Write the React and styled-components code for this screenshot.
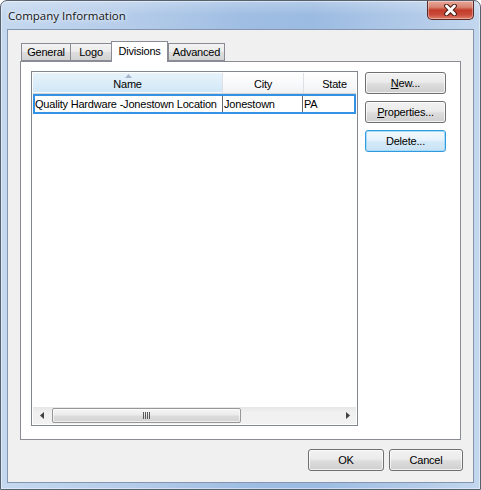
import React from 'react';
import styled, { createGlobalStyle } from 'styled-components';

const GlobalStyle = createGlobalStyle`
  html, body {
    margin: 0;
    padding: 0;
    width: 481px;
    height: 490px;
    overflow: hidden;
    background: #fff;
  }
  * { box-sizing: border-box; }
`;

const Window = styled.div`
  width: 481px;
  height: 490px;
  display: flex;
  flex-direction: column;
  padding: 0 6px 6px;
  border: 1px solid #58626f;
  border-radius: 7px 7px 0 0;
  background:
    linear-gradient(180deg, rgba(255,255,255,0.25) 0px, rgba(255,255,255,0) 14px),
    linear-gradient(90deg, #c4d8ef 0%, #b6cdea 25%, #a0bee3 50%, #9cbbe2 65%, #b0c9e8 85%, #c3d7ee 100%);
  box-shadow: inset 0 0 0 1px rgba(255,255,255,0.45);
  font-family: "Liberation Sans", Arial, sans-serif;
  font-size: 11px;
  letter-spacing: -0.2px;
  color: #000;
`;

const TitleBar = styled.div`
  height: 28px;
  display: flex;
  align-items: flex-start;
  justify-content: space-between;
`;

const Title = styled.div`
  margin: 7px 0 0 1px;
  line-height: 16px;
  font-family: "Open Sans", "Liberation Sans", sans-serif;
  font-size: 11.5px;
  letter-spacing: 0;
  color: #141414;
  text-shadow: 0 0 6px rgba(255,255,255,0.9), 0 0 3px rgba(255,255,255,0.8);
`;

const CloseButton = styled.div`
  width: 47px;
  height: 19px;
  display: flex;
  align-items: center;
  justify-content: center;
  border: 1px solid #5b2a26;
  border-top: none;
  border-radius: 0 0 5px 5px;
  background: linear-gradient(180deg, #e8a89c 0%, #d7826f 35%, #c43c2a 50%, #c9493a 75%, #e0806a 100%);
  box-shadow: inset 0 0 0 1px rgba(255,255,255,0.35);
`;

const Client = styled.div`
  flex: 1;
  display: flex;
  flex-direction: column;
  padding: 11px 12px 11px;
  background: #f0f0f0;
  border: 1px solid #8396ad;
`;

const TabStrip = styled.div`
  height: 20px;
  display: flex;
  align-items: flex-end;
  padding-left: 1px;
`;

const Tab = styled.div`
  position: relative;
  width: ${p => p.$w}px;
  height: ${p => (p.$active ? 21 : 18)}px;
  margin-bottom: ${p => (p.$active ? -1 : 0)}px;
  display: flex;
  align-items: center;
  justify-content: center;
  padding-bottom: ${p => (p.$active ? 3 : 0)}px;
  border: 1px solid #898c95;
  border-bottom: ${p => (p.$active ? 'none' : '1px solid #898c95')};
  border-right: ${p => (p.$active || p.$last ? '1px solid #898c95' : 'none')};
  background: ${p => (p.$active
    ? '#ffffff'
    : 'linear-gradient(180deg, #f3f3f3 0%, #ebebeb 50%, #dedede 51%, #d3d3d3 100%)')};
  z-index: ${p => (p.$active ? 1 : 0)};
`;

const Panel = styled.div`
  flex: 1;
  display: flex;
  gap: 7px;
  padding: 9px 14px 13px 10px;
  background: #fff;
  border: 1px solid #898c95;
`;

const ListView = styled.div`
  flex: 1;
  display: flex;
  flex-direction: column;
  padding: 1px;
  border: 1px solid #828790;
  overflow: hidden;
`;

const Header = styled.div`
  height: 21px;
  display: flex;
  border-bottom: 1px solid #d5d5d5;
  background: linear-gradient(180deg, #ffffff 0%, #f7f8f9 60%, #f1f2f4 100%);
`;

const HeaderCell = styled.div`
  position: relative;
  flex: 0 0 ${p => p.$w}px;
  display: flex;
  align-items: center;
  justify-content: center;
  padding-top: 2px;
  border-right: 1px solid #dde1e6;
  background: ${p => (p.$sorted
    ? 'linear-gradient(180deg, #e7f3fb 0%, #dcedf9 50%, #cfe7f6 100%)'
    : 'transparent')};
  box-shadow: ${p => (p.$sorted ? 'inset 0 -1px 0 #f4f9fd' : 'none')};
`;

const SortArrow = styled.svg`
  position: absolute;
  top: 1px;
  left: 50%;
  margin-left: -3px;
`;

const Row = styled.div`
  height: 20px;
  display: flex;
  border: 2px solid #3391e6;
`;

const Cell = styled.div`
  flex: 0 0 ${p => p.$w}px;
  display: flex;
  align-items: center;
  padding-left: ${p => p.$pad}px;
  white-space: nowrap;
  overflow: hidden;
  border-right: ${p => (p.$grid ? '1px solid #6a6a6a' : 'none')};
`;

const ListBody = styled.div`
  flex: 1;
`;

const ScrollBar = styled.div`
  height: 17px;
  display: flex;
  align-items: stretch;
  background: linear-gradient(180deg, #e6e6e6 0%, #f0f0f0 30%, #f2f2f2 100%);
`;

const ArrowButton = styled.div`
  flex: 0 0 17px;
  display: flex;
  align-items: center;
  justify-content: center;
`;

const Track = styled.div`
  flex: 1;
  display: flex;
  padding: 1px 0;
`;

const Thumb = styled.div`
  width: 189px;
  margin-left: 2px;
  display: flex;
  align-items: center;
  justify-content: center;
  border: 1px solid #979797;
  border-radius: 2px;
  background: linear-gradient(180deg, #f6f6f6 0%, #ececec 45%, #dcdcdc 55%, #d4d4d4 100%);
  box-shadow: inset 0 0 0 1px rgba(255,255,255,0.6);
`;

const ButtonColumn = styled.div`
  display: flex;
  flex-direction: column;
  gap: 7px;
  padding-top: 1px;
`;

const Button = styled.div`
  width: ${p => p.$w}px;
  height: 22px;
  display: flex;
  align-items: center;
  justify-content: center;
  border: 1px solid ${p => (p.$default ? '#3399dd' : '#707070')};
  border-radius: 3px;
  background: ${p => (p.$default
    ? 'linear-gradient(180deg, #f3f9fd 0%, #e5f2fb 45%, #d3e9f8 55%, #c9e3f5 100%)'
    : 'linear-gradient(180deg, #f2f2f2 0%, #ebebeb 45%, #dddddd 55%, #cfcfcf 100%)')};
  box-shadow: inset 0 0 0 1px ${p => (p.$default ? 'rgba(160,218,250,0.95)' : 'rgba(255,255,255,0.7)')};
  u { text-decoration: underline; text-underline-offset: 1px; }
`;

const Footer = styled.div`
  margin: 9px -2px 0 0;
  display: flex;
  justify-content: flex-end;
  gap: 5px;
`;

const CloseGlyph = () => (
  <svg width="15" height="12" viewBox="0 0 15 12">
    <path d="M3.5 2 L11.5 10 M11.5 2 L3.5 10" stroke="#4b1c16" strokeWidth="4.8" strokeLinecap="round" />
    <path d="M3.5 2 L11.5 10 M11.5 2 L3.5 10" stroke="#ffffff" strokeWidth="2.8" strokeLinecap="round" />
  </svg>
);

const columns = [
  { name: 'Name', w: 190, sorted: true },
  { name: 'City', w: 81 },
  { name: 'State', w: 62 },
];

const rows = [
  { name: 'Quality Hardware -Jonestown Location', city: 'Jonestown', state: 'PA' },
];

const tabs = [
  { label: 'General', w: 49 },
  { label: 'Logo', w: 41 },
  { label: 'Divisions', w: 57, active: true },
  { label: 'Advanced', w: 57, last: true },
];

export default function App() {
  return (
    <>
      <GlobalStyle />
      <Window>
        <TitleBar>
          <Title>Company Information</Title>
          <CloseButton><CloseGlyph /></CloseButton>
        </TitleBar>
        <Client>
          <TabStrip>
            {tabs.map(t => (
              <Tab key={t.label} $w={t.w} $active={t.active} $last={t.last}>{t.label}</Tab>
            ))}
          </TabStrip>
          <Panel>
            <ListView>
              <Header>
                {columns.map(c => (
                  <HeaderCell key={c.name} $w={c.w} $sorted={c.sorted}>
                    {c.sorted && (
                      <SortArrow width="7" height="4" viewBox="0 0 7 4">
                        <path d="M0 4 L3.5 0 L7 4 Z" fill="#a7b7cb" />
                      </SortArrow>
                    )}
                    {c.name}
                  </HeaderCell>
                ))}
              </Header>
              {rows.map(r => (
                <Row key={r.name}>
                  <Cell $w={188} $pad={0} $grid>{r.name}</Cell>
                  <Cell $w={80} $pad={1} $grid>{r.city}</Cell>
                  <Cell $w={60} $pad={1}>{r.state}</Cell>
                </Row>
              ))}
              <ListBody />
              <ScrollBar>
                <ArrowButton>
                  <svg width="4" height="7" viewBox="0 0 4 7"><path d="M4 0 L0 3.5 L4 7 Z" fill="#404040" /></svg>
                </ArrowButton>
                <Track>
                  <Thumb>
                    <svg width="8" height="7" viewBox="0 0 8 7">
                      <path d="M0.5 0 V7 M2.5 0 V7 M4.5 0 V7 M6.5 0 V7" stroke="#5a5a5a" strokeWidth="1" />
                    </svg>
                  </Thumb>
                </Track>
                <ArrowButton>
                  <svg width="4" height="7" viewBox="0 0 4 7"><path d="M0 0 L4 3.5 L0 7 Z" fill="#404040" /></svg>
                </ArrowButton>
              </ScrollBar>
            </ListView>
            <ButtonColumn>
              <Button $w={81}><span><u>N</u>ew...</span></Button>
              <Button $w={81}><span><u>P</u>roperties...</span></Button>
              <Button $w={81} $default>Delete...</Button>
            </ButtonColumn>
          </Panel>
          <Footer>
            <Button $w={76}>OK</Button>
            <Button $w={74}>Cancel</Button>
          </Footer>
        </Client>
      </Window>
    </>
  );
}
